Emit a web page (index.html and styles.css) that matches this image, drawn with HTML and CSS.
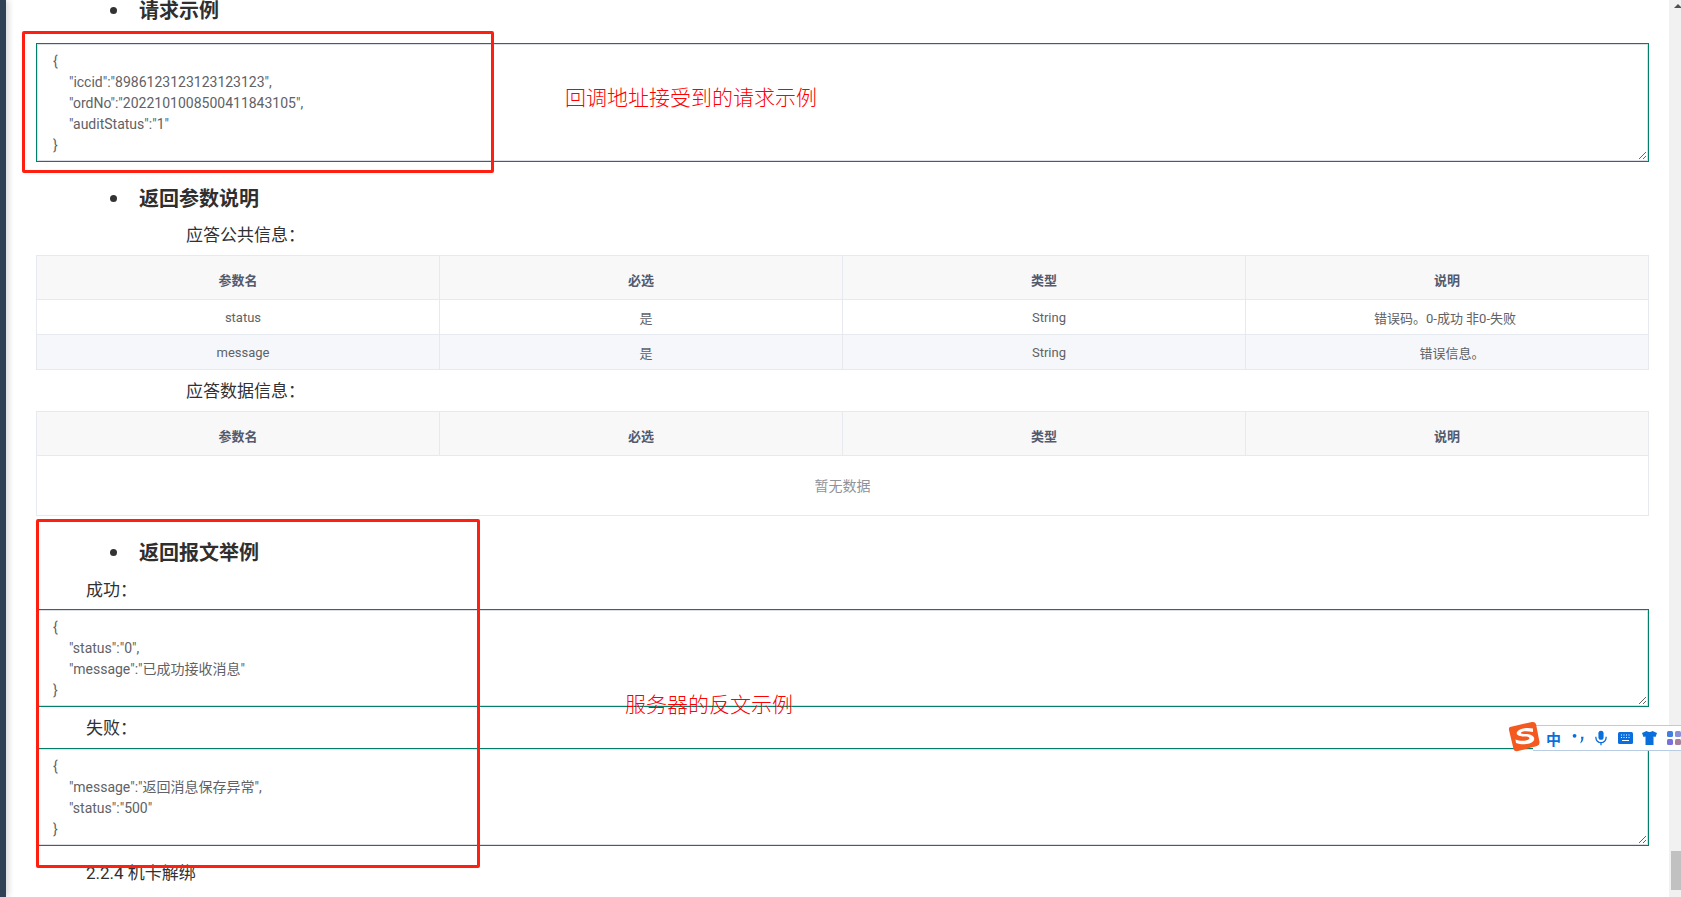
FILE: index.html
```html
<!DOCTYPE html>
<html lang="zh-CN">
<head>
<meta charset="utf-8">
<title>接口文档</title>
<link rel="stylesheet" href="styles.css">
</head>
<body>
<div class="page">
  <aside class="sidebar"></aside>
  <main class="content">
    <ul class="section first"><li>请求示例</li></ul>
    <textarea class="code rows5" readonly>{
    "iccid":"8986123123123123123",
    "ordNo":"2022101008500411843105",
    "auditStatus":"1"
}</textarea>
    <ul class="section second"><li>返回参数说明</li></ul>
    <p class="label deep top-label">应答公共信息：</p>
    <table class="params">
      <thead><tr><th>参数名</th><th>必选</th><th>类型</th><th>说明</th></tr></thead>
      <tbody>
        <tr><td>status</td><td>是</td><td>String</td><td class="desc">错误码。0-成功 非0-失败</td></tr>
        <tr class="zebra"><td>message</td><td>是</td><td>String</td><td>错误信息。</td></tr>
      </tbody>
    </table>
    <p class="label deep data-label">应答数据信息：</p>
    <table class="params">
      <thead><tr><th>参数名</th><th>必选</th><th>类型</th><th>说明</th></tr></thead>
      <tbody>
        <tr><td class="empty" colspan="4">暂无数据</td></tr>
      </tbody>
    </table>
    <ul class="section third"><li>返回报文举例</li></ul>
    <p class="label shallow after-heading">成功：</p>
    <textarea class="code rows4" readonly>{
    "status":"0",
    "message":"已成功接收消息"
}</textarea>
    <p class="label shallow between">失败：</p>
    <textarea class="code rows4" readonly>{
    "message":"返回消息保存异常",
    "status":"500"
}</textarea>
    <p class="label shallow next">2.2.4 机卡解绑</p>
  </main>
  <div class="scrollbar">
    <span class="arrow"></span>
    <span class="thumb"></span>
  </div>
</div>

<div class="note-box box-one"></div>
<div class="note-box box-two"></div>
<div class="note-text text-one">回调地址接受到的请求示例</div>
<div class="note-text text-two">服务器的反文示例</div>

<div class="ime">
  <svg class="ime-logo" width="32" height="31" viewBox="0 0 32 31">
    <path d="M2 6 L24 1 Q27 0.5 28 3 L31.5 21 Q32 24 29 25 L10 30 Q6.5 31 5.5 28 L1 9 Q0.5 6.5 2 6Z" fill="#f4591f"/>
    <path d="M25 7.5 C19 6 11 7.5 9 11 C7.5 14.5 12 15.5 16 15.5 C19 15.5 22.5 16 21 18 C18.5 20.5 11 20 7.5 18.5 L8 22 C13 24 22 24 25.5 20 C28 16 24 13.5 19 13 C15 13 12 13 13 11.5 C15 9.5 20 10 25 11Z" fill="#fff"/>
  </svg>
  <span class="ime-zh">中</span>
  <svg class="ime-icon" width="12" height="12" viewBox="0 0 14 14"><circle cx="3" cy="4.5" r="2.200" fill="#0a6fdc"/><path d="M10.500 5.500 h3 l-.5 3.500 q-1 3.500-3.500 4.500 l1.500-4.500z" fill="#0a6fdc"/></svg>
  <svg class="ime-icon" width="12" height="16" viewBox="0 0 14 17"><rect x="4" y="0" width="6" height="10.500" rx="3" fill="#0a6fdc"/><path d="M1 7 v1 a6 6 0 0 0 12 0 v-1" fill="none" stroke="#0a6fdc" stroke-width="1.500"/><path d="M7 14 v3" stroke="#0a6fdc" stroke-width="1.500"/></svg>
  <svg class="ime-icon" width="15" height="12" viewBox="0 0 15 12"><rect width="15" height="12" rx="1.500" fill="#0a6fdc"/><path d="M3 3h1M5.500 3h1M8 3h1M10.500 3h1M3 5.500h1M5.500 5.500h1M8 5.500h1M10.500 5.500h1M4 8.500h7" stroke="#fff" stroke-width="1.200"/></svg>
  <svg class="ime-icon shirt" width="15" height="14" viewBox="0 0 15 14"><path d="M4.500 0 Q7.500 2 10.500 0 L15 2 L13.500 6 L11.500 5.500 L11.500 14 L3.500 14 L3.500 5.500 L1.500 6 L0 2Z" fill="#0a6fdc"/></svg>
  <svg class="ime-icon grid" width="14" height="14" viewBox="0 0 14 14"><rect width="6" height="6" rx="1.500" fill="#3f7fe0"/><rect x="8" width="6" height="6" rx="1.500" fill="#8a8fd8"/><rect y="8" width="6" height="6" rx="1.500" fill="#7a6fe0"/><rect x="8" y="8" width="6" height="6" rx="1.500" fill="#a8809c"/></svg>
</div>
</body>
</html>
```

FILE: styles.css
```css
* { box-sizing: border-box; }
html, body { margin: 0; height: 100%; overflow: hidden; background: #fff; }
body {
  font-family: "Roboto", "Noto Sans CJK SC", sans-serif;
  color: #303133;
}
.page { display: flex; height: 897px; width: 1681px; overflow: hidden; }
.sidebar { flex: 0 0 6px; background: #304156; box-shadow: 2px 0 6px rgba(0, 21, 41, .2); }
.content { flex: 1; min-width: 0; padding: 0 20px 0 30px; overflow: hidden; }

.section { margin: 0; padding: 0 0 0 74px; list-style: none; font-size: 20px; font-weight: 700; line-height: 28px; color: #2f2f2f; font-family: "Noto Sans CJK SC", sans-serif; }
.section li { display: flex; align-items: center; gap: 22px; }
.section li::before { content: ""; flex: none; width: 7px; height: 7px; border-radius: 50%; background: #333; }
.section.first { margin-top: -4px; margin-bottom: 20px; }
.section.second { margin-top: 23px; }
.section.third { margin-top: 22px; }

.label { margin: 0; font-size: 17px; line-height: 24px; color: #303133; }
.label.deep { padding-left: 150px; }
.label.top-label { margin-top: 11px; margin-bottom: 8px; }
.label.data-label { margin-top: 9px; margin-bottom: 8px; }
.label.shallow { padding-left: 50px; }
.label.after-heading { margin-top: 12px; margin-bottom: 8px; }
.label.between { margin-top: 10px; margin-bottom: 9px; }
.label.next { margin-top: 16px; }

.code {
  display: block;
  width: calc(100% - 2px);
  margin: 0 1px;
  padding: 6px 15px 4px;
  border: 1px solid #dcdfe6;
  outline: 1px solid #00806a;
  font: 14px/21px "Roboto", "Noto Sans CJK SC", sans-serif;
  word-spacing: .5px;
  color: #606266;
  background: #fff;
  resize: vertical;
  white-space: pre-wrap;
  overflow: hidden;
}
.rows5 { height: 117px; }
.rows4 { height: 96px; }

.params { width: 100%; border-collapse: collapse; table-layout: fixed; font-size: 13px; color: #606266; }
.params th, .params td { border: 1px solid #e6e9ee; text-align: center; padding: 0 10px; }
.params th { height: 44px; padding-top: 4px; background: #f8f8f9; font-weight: 700; font-size: 13px; color: #515a6e; font-family: "Noto Sans CJK SC", sans-serif; }
.params td { height: 35px; padding-left: 20px; }
.params td.desc { padding-left: 10px; padding-right: 14px; }
.params .zebra td { background: #f5f7fa; }
.params td.empty { height: 60px; padding-left: 10px; padding-bottom: 2px; font-size: 14px; color: #909399; }

.scrollbar { flex: 0 0 12px; position: relative; background: #f1f1f1; display: flex; flex-direction: column; overflow: hidden; }
.arrow { flex: none; margin: 4px 0 0 5px; width: 8px; height: 4px; border-left: 4px solid transparent; border-right: 4px solid transparent; border-bottom: 4px solid #505050; }
.thumb { margin: 843px 0 0 2px; width: 13px; flex: 0 0 39px; background: #c1c1c1; }

.note-box { position: absolute; border: 3px solid #ff1f10; border-radius: 2px; }
.box-one { left: 22px; top: 31px; width: 472px; height: 142px; }
.box-two { left: 36px; top: 519px; width: 444px; height: 349px; }
.note-text { position: absolute; color: #ff0000; font-size: 21px; line-height: 28px; font-weight: 300; font-family: "Noto Sans CJK SC", sans-serif; white-space: nowrap; }
.text-one { left: 565px; top: 82px; }
.text-two { left: 625px; top: 689px; }

.ime {
  position: absolute; left: 1533px; top: 725px; width: 148px; height: 26px;
  display: flex; align-items: center; gap: 11px; padding-left: 13px;
  background: #fff; border-top: 1px solid #b8cce4; border-bottom: 1px solid #b8cce4;
}
.ime-logo { position: absolute; left: -25px; top: -5px; }
.ime-zh { font: 700 15px/1 "Noto Sans CJK SC", sans-serif; color: #0a6fdc; }
.ime-icon { flex: none; }
.shirt { margin-left: -2px; }
.grid { margin-left: -1px; }
```
